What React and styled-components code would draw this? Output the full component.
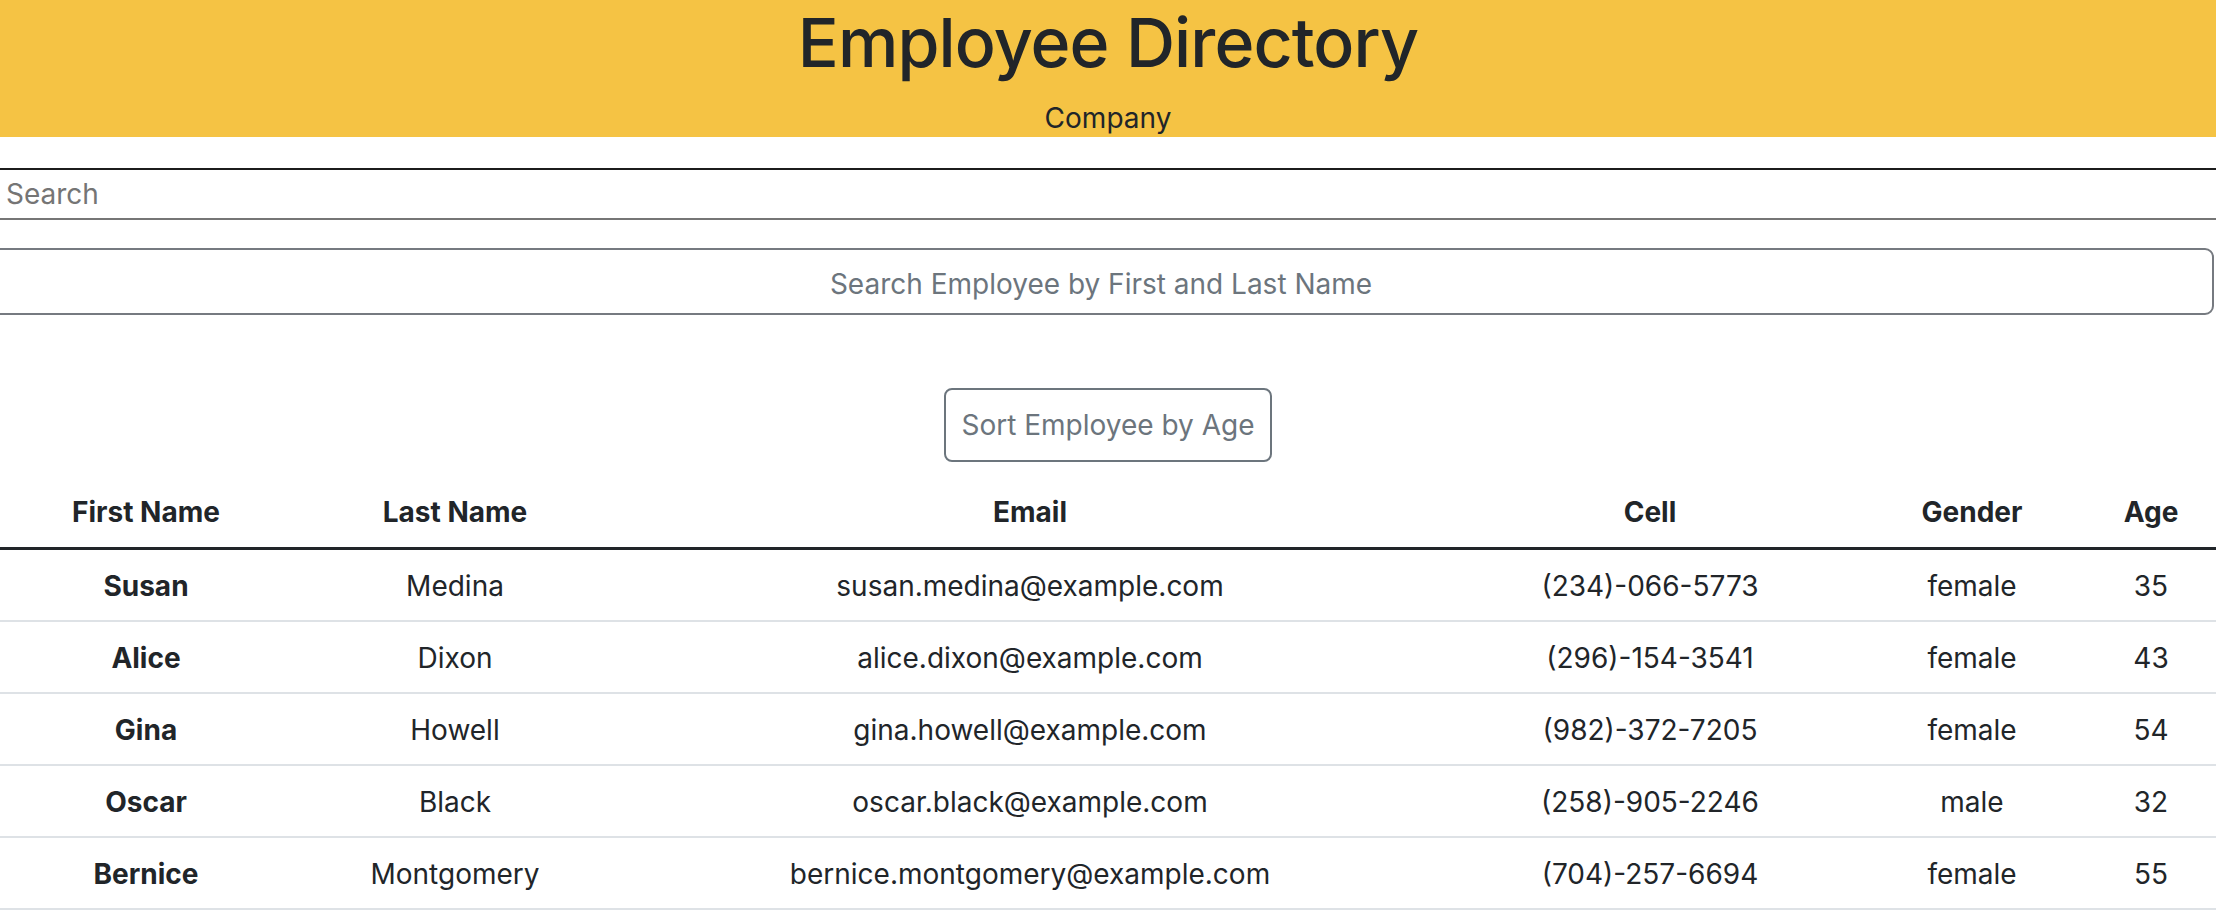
import React, { useState } from "react";
import styled, { createGlobalStyle } from "styled-components";

const EMPLOYEES = [
  { id: 1, first: "Susan", last: "Medina", email: "susan.medina@example.com", cell: "(234)-066-5773", gender: "female", age: 35 },
  { id: 2, first: "Alice", last: "Dixon", email: "alice.dixon@example.com", cell: "(296)-154-3541", gender: "female", age: 43 },
  { id: 3, first: "Gina", last: "Howell", email: "gina.howell@example.com", cell: "(982)-372-7205", gender: "female", age: 54 },
  { id: 4, first: "Oscar", last: "Black", email: "oscar.black@example.com", cell: "(258)-905-2246", gender: "male", age: 32 },
  { id: 5, first: "Bernice", last: "Montgomery", email: "bernice.montgomery@example.com", cell: "(704)-257-6694", gender: "female", age: 55 },
];

const COLUMNS = [
  { label: "First Name", width: 292 },
  { label: "Last Name", width: 326 },
  { label: "Email", width: 824 },
  { label: "Cell", width: 416 },
  { label: "Gender", width: 228 },
  { label: "Age", width: 130 },
];

function App() {
  const [search, setSearch] = useState("");
  const [nameSearch, setNameSearch] = useState("");
  const [sortAsc, setSortAsc] = useState(null);

  const query = (search + " " + nameSearch).trim().toLowerCase();
  let rows = EMPLOYEES.filter((emp) =>
    (emp.first + " " + emp.last).toLowerCase().includes(query)
  );
  if (sortAsc !== null) {
    rows = [...rows].sort((a, b) => (sortAsc ? a.age - b.age : b.age - a.age));
  }

  return (
    <>
      <GlobalStyle />
      <Header>
        <Title>Employee Directory</Title>
        <Subtitle>Company</Subtitle>
      </Header>
      <Main>
        <PlainSearch
          type="text"
          placeholder="Search"
          value={search}
          onChange={(e) => setSearch(e.target.value)}
        />
        <NameSearch
          type="text"
          placeholder="Search Employee by First and Last Name"
          value={nameSearch}
          onChange={(e) => setNameSearch(e.target.value)}
        />
        <ButtonRow>
          <SortButton onClick={() => setSortAsc(sortAsc === null ? true : !sortAsc)}>
            Sort Employee by Age
          </SortButton>
        </ButtonRow>
        <Table>
          <colgroup>
            {COLUMNS.map((col) => (
              <Col key={col.label} $width={col.width} />
            ))}
          </colgroup>
          <thead>
            <tr>
              {COLUMNS.map((col) => (
                <HeadCell key={col.label}>{col.label}</HeadCell>
              ))}
            </tr>
          </thead>
          <tbody>
            {rows.map((emp) => (
              <tr key={emp.id}>
                <Cell $bold>{emp.first}</Cell>
                <Cell>{emp.last}</Cell>
                <Cell>{emp.email}</Cell>
                <Cell>{emp.cell}</Cell>
                <Cell>{emp.gender}</Cell>
                <Cell>{emp.age}</Cell>
              </tr>
            ))}
          </tbody>
        </Table>
      </Main>
    </>
  );
}

export default App;

const GlobalStyle = createGlobalStyle`
  body {
    margin: 0;
    font-family: Inter, "Liberation Sans", sans-serif;
    color: #212529;
    background: #fff;
    overflow-x: hidden;
  }
`;

const Header = styled.header`
  background: #f5c344;
  height: 137px;
  text-align: center;
  overflow: hidden;
`;

const Title = styled.h1`
  margin: 0 0 14px;
  font-size: 68px;
  line-height: 84px;
  font-weight: 500;
  letter-spacing: -0.9px;
`;

const Subtitle = styled.p`
  margin: 0;
  font-size: 28px;
  line-height: 40px;
`;

const Main = styled.main`
  display: flex;
  flex-direction: column;
  padding-top: 31px;
`;

const PlainSearch = styled.input`
  box-sizing: border-box;
  width: 100%;
  height: 52px;
  margin: 0;
  padding: 0 6px;
  border: none;
  border-top: 2px solid #1c1c1c;
  border-bottom: 2px solid #767676;
  font-family: inherit;
  font-size: 28px;
  color: #212529;
  outline: none;

  &::placeholder {
    color: #757575;
  }
`;

const NameSearch = styled.input`
  box-sizing: border-box;
  width: calc(100% + 10px);
  height: 67px;
  margin: 28px 0 0 -12px;
  padding: 4px 12px 0;
  border: 2px solid #767a80;
  border-radius: 9px;
  font-family: inherit;
  font-size: 28px;
  text-align: center;
  color: #212529;
  outline: none;

  &::placeholder {
    color: #6c757d;
  }
`;

const ButtonRow = styled.div`
  display: flex;
  justify-content: center;
  margin: 73px 0 15px;
`;

const SortButton = styled.button`
  box-sizing: border-box;
  height: 74px;
  padding: 0 15px;
  border: 2px solid #6c757d;
  border-radius: 8px;
  background: #fff;
  font-family: inherit;
  font-size: 28px;
  color: #6c757d;
  cursor: pointer;

  &:hover {
    background: #6c757d;
    color: #fff;
  }
`;

const Table = styled.table`
  width: 100%;
  table-layout: fixed;
  border-collapse: collapse;
  font-size: 28px;
`;

const Col = styled.col`
  width: ${(p) => p.$width}px;
`;

const HeadCell = styled.th`
  height: 70px;
  padding: 0;
  text-align: center;
  font-weight: 700;
  border-bottom: 3px solid #212529;
  vertical-align: middle;
`;

const Cell = styled.td`
  height: 68px;
  padding: 2px 0 0;
  text-align: center;
  vertical-align: middle;
  font-weight: ${(p) => (p.$bold ? 700 : 400)};
  border-bottom: 2px solid #dee2e6;
  white-space: nowrap;
`;
